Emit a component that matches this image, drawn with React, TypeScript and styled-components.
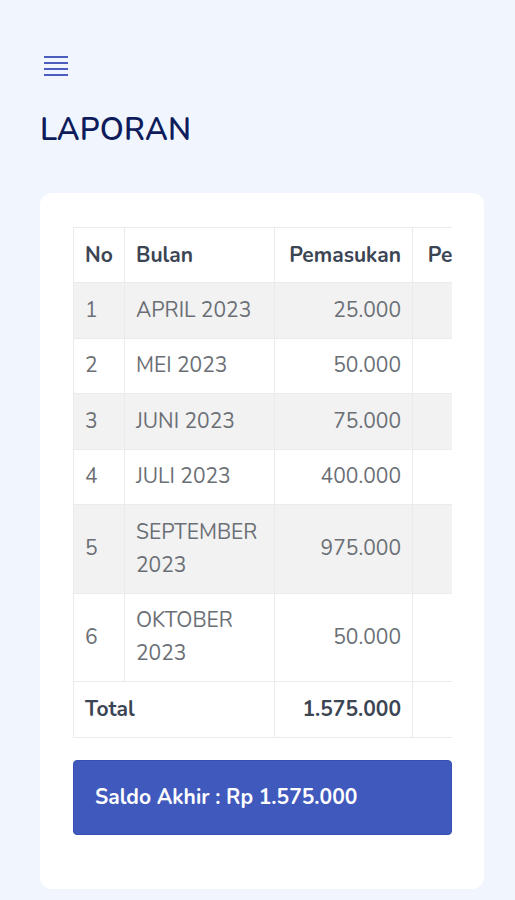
import React from "react";
import styled, { createGlobalStyle } from "styled-components";

const Global = createGlobalStyle`
  html, body { margin: 0; padding: 0; background: #f1f6fe; }
  body { font-family: "Nunito", "Noto Sans", "Open Sans", sans-serif; }
  * { box-sizing: border-box; }
`;

const Page = styled.div`
  padding: 56px 31px 13px 40px;
  min-height: 900px;
`;

const MenuButton = styled.button`
  display: flex;
  flex-direction: column;
  gap: 4px;
  width: 24px;
  padding: 0;
  margin: 0 0 0 4px;
  border: 0;
  background: transparent;
`;

const MenuLine = styled.span`
  display: block;
  height: 2px;
  width: 24px;
  background: #4b5ebf;
`;

const Title = styled.h1`
  margin: 34px 0 43px 0;
  font-size: 31px;
  font-weight: 600;
  color: #0e1c5c;
  letter-spacing: 0.25px;
  line-height: 40px;
`;

const Card = styled.div`
  background: #ffffff;
  border-radius: 12px;
  padding: 34px 32px 54px 33px;
`;

const Scroller = styled.div`
  overflow-x: auto;
  scrollbar-width: none;
  &::-webkit-scrollbar { display: none; }
`;

const Table = styled.table`
  border-collapse: collapse;
  font-size: 21px;
  color: #6b6f75;
  white-space: nowrap;
`;

const Th = styled.th<{ $right?: boolean; $w: number }>`
  min-width: ${(p) => p.$w}px;
  width: ${(p) => p.$w}px;
  height: 55px;
  padding: 0 11px;
  text-align: ${(p) => (p.$right ? "right" : "left")};
  font-weight: 700;
  color: #3c4554;
  border: 1px solid #ebebeb;
`;

const Tr = styled.tr<{ $striped?: boolean }>`
  background: ${(p) => (p.$striped ? "#f2f2f2" : "#ffffff")};
`;

const Td = styled.td<{ $right?: boolean; $bold?: boolean; $wrap?: boolean }>`
  padding: 10.5px 11px 11px;
  text-align: ${(p) => (p.$right ? "right" : "left")};
  font-weight: ${(p) => (p.$bold ? 700 : 400)};
  color: ${(p) => (p.$bold ? "#3c4554" : "#6b6f75")};
  border: 1px solid #ebebeb;
  line-height: 33px;
  white-space: ${(p) => (p.$wrap ? "normal" : "nowrap")};
`;

const Saldo = styled.div`
  margin-top: 22px;
  height: 75px;
  display: flex;
  align-items: center;
  padding: 0 21px;
  background: #4059bd;
  border: 1px solid #3550b6;
  border-radius: 4px;
  color: #ffffff;
  font-size: 21px;
  font-weight: 700;
`;

const rows = [
  { no: 1, bulan: "APRIL 2023", masuk: "25.000" },
  { no: 2, bulan: "MEI 2023", masuk: "50.000" },
  { no: 3, bulan: "JUNI 2023", masuk: "75.000" },
  { no: 4, bulan: "JULI 2023", masuk: "400.000" },
  { no: 5, bulan: "SEPTEMBER 2023", masuk: "975.000" },
  { no: 6, bulan: "OKTOBER 2023", masuk: "50.000" },
];

export default function App() {
  return (
    <>
      <Global />
      <Page>
        <MenuButton aria-label="menu">
          <MenuLine />
          <MenuLine />
          <MenuLine />
          <MenuLine />
        </MenuButton>
        <Title>LAPORAN</Title>
        <Card>
          <Scroller>
            <Table>
              <thead>
                <tr>
                  <Th $w={51}>No</Th>
                  <Th $w={150}>Bulan</Th>
                  <Th $w={138} $right>Pemasukan</Th>
                  <Th $w={150} $right>Pengeluaran</Th>
                  <Th $w={120} $right>Saldo</Th>
                </tr>
              </thead>
              <tbody>
                {rows.map((r, i) => (
                  <Tr key={r.no} $striped={i % 2 === 0}>
                    <Td>{r.no}</Td>
                    <Td $wrap>{r.bulan}</Td>
                    <Td $right>{r.masuk}</Td>
                    <Td $right>0</Td>
                    <Td $right>{r.masuk}</Td>
                  </Tr>
                ))}
                <Tr>
                  <Td $bold colSpan={2}>Total</Td>
                  <Td $bold $right>1.575.000</Td>
                  <Td $bold $right>0</Td>
                  <Td $bold $right>1.575.000</Td>
                </Tr>
              </tbody>
            </Table>
          </Scroller>
          <Saldo>Saldo Akhir : Rp 1.575.000</Saldo>
        </Card>
      </Page>
    </>
  );
}
